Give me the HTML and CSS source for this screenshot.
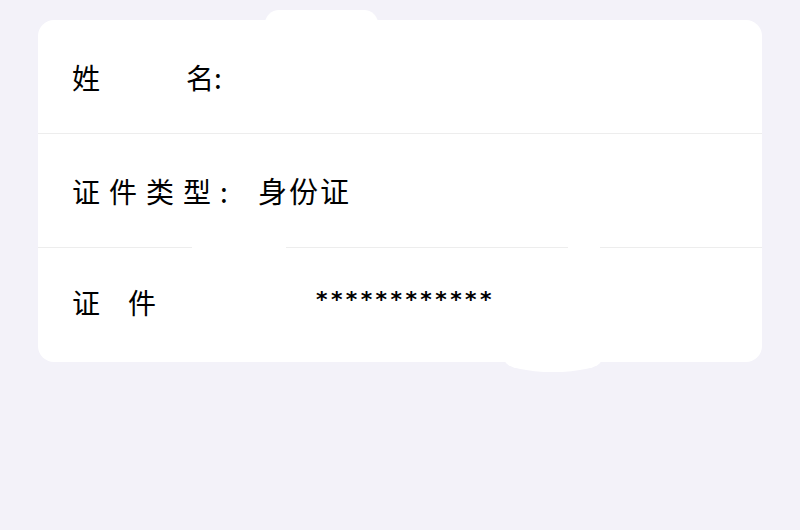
FILE: index.html
```html
<!DOCTYPE html>
<html lang="zh-CN">
<head>
    <meta charset="UTF-8">
    <meta name="viewport" content="width=device-width, initial-scale=1.0">
    <title>证件信息</title>
    <link rel="stylesheet" href="styles.css">
</head>
<body>
    <div class="page">
        <div class="card">
            <div class="row">
                <span class="label"><span class="c">姓</span><span class="gap-wide"></span><span class="c">名</span>:</span>
                <span class="value"></span>
            </div>
            <div class="row">
                <span class="label spaced">证件类型:</span>
                <span class="value">身份证</span>
            </div>
            <div class="row row-last">
                <span class="label"><span class="c">证</span><span class="gap"></span><span class="c">件</span></span>
                <span class="value masked">************</span>
            </div>

            <!-- white patches left by editing -->
            <div class="patch patch-top"></div>
            <div class="patch patch-line1"></div>
            <div class="patch patch-line2"></div>
            <div class="patch patch-bottom"></div>
        </div>
    </div>
</body>
</html>
```

FILE: styles.css
```css
body {
    margin: 0;
    background-color: #f3f2f9;
    font-family: "Noto Sans CJK SC", "Noto Sans", sans-serif;
    color: #000;
}
.page {
    padding: 20px 38px;
    height: 530px;
    box-sizing: border-box;
}
.card {
    position: relative;
    background-color: #fff;
    border-radius: 16px;
}
.row {
    display: flex;
    align-items: center;
    height: 113px;
    padding-left: 34px;
    font-size: 28px;
    border-bottom: 1px solid #ededed;
}
.row-last {
    border-bottom: none;
    height: 114px;
    padding-bottom: 6px;
    box-sizing: border-box;
}
.label {
    display: flex;
    align-items: center;
    width: 186px;
    line-height: 1;
}
.label.spaced {
    letter-spacing: 9px;
}
.gap-wide {
    width: 86px;
}
.gap {
    width: 28px;
}
.value {
    line-height: 1;
    font-size: 29px;
    letter-spacing: 2px;
}
.masked {
    margin-left: 58px;
    margin-top: -4px;
    font-family: "DejaVu Sans", sans-serif;
    font-size: 22px;
    font-weight: bold;
    letter-spacing: 3.4px;
}
.patch {
    position: absolute;
    background-color: #fff;
}
.patch-top {
    left: 227px;
    top: -10px;
    width: 113px;
    height: 20px;
    border-radius: 14px 14px 0 0;
}
.patch-line1 {
    left: 154px;
    top: 226px;
    width: 94px;
    height: 4px;
}
.patch-line2 {
    left: 530px;
    top: 226px;
    width: 32px;
    height: 4px;
}
.patch-bottom {
    left: 467px;
    top: 330px;
    width: 96px;
    height: 22px;
    border-radius: 0 0 50% 50%;
}
```
